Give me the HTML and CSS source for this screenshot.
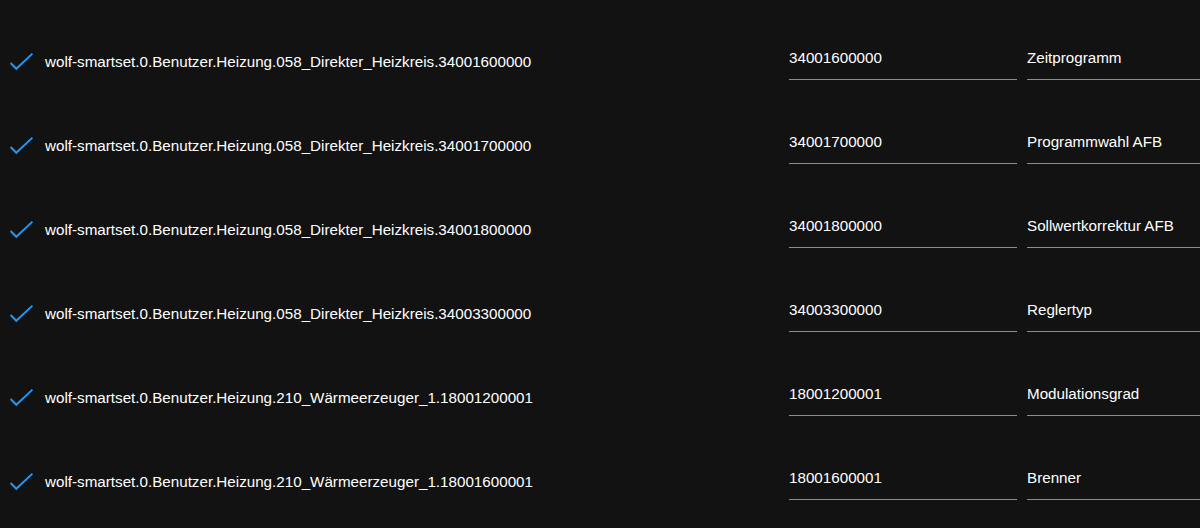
FILE: index.html
```html
<!DOCTYPE html>
<html lang="de">
<head>
<meta charset="utf-8">
<title>Objekte</title>
<link rel="stylesheet" href="styles.css">
</head>
<body>
<div class="list">
  <div class="row">
    <span class="icon"><svg viewBox="0 0 24 24" width="24" height="24"><polyline points="1.5,12.5 7,18 22.5,3.5"/></svg></span>
    <span class="name">wolf-smartset.0.Benutzer.Heizung.058_Direkter_Heizkreis.34001600000</span>
    <label class="field"><input class="input" value="34001600000"></label>
    <label class="field"><input class="input" value="Zeitprogramm"></label>
  </div>
  <div class="row">
    <span class="icon"><svg viewBox="0 0 24 24" width="24" height="24"><polyline points="1.5,12.5 7,18 22.5,3.5"/></svg></span>
    <span class="name">wolf-smartset.0.Benutzer.Heizung.058_Direkter_Heizkreis.34001700000</span>
    <label class="field"><input class="input" value="34001700000"></label>
    <label class="field"><input class="input" value="Programmwahl AFB"></label>
  </div>
  <div class="row">
    <span class="icon"><svg viewBox="0 0 24 24" width="24" height="24"><polyline points="1.5,12.5 7,18 22.5,3.5"/></svg></span>
    <span class="name">wolf-smartset.0.Benutzer.Heizung.058_Direkter_Heizkreis.34001800000</span>
    <label class="field"><input class="input" value="34001800000"></label>
    <label class="field"><input class="input" value="Sollwertkorrektur AFB"></label>
  </div>
  <div class="row">
    <span class="icon"><svg viewBox="0 0 24 24" width="24" height="24"><polyline points="1.5,12.5 7,18 22.5,3.5"/></svg></span>
    <span class="name">wolf-smartset.0.Benutzer.Heizung.058_Direkter_Heizkreis.34003300000</span>
    <label class="field"><input class="input" value="34003300000"></label>
    <label class="field"><input class="input" value="Reglertyp"></label>
  </div>
  <div class="row">
    <span class="icon"><svg viewBox="0 0 24 24" width="24" height="24"><polyline points="1.5,12.5 7,18 22.5,3.5"/></svg></span>
    <span class="name">wolf-smartset.0.Benutzer.Heizung.210_Wärmeerzeuger_1.18001200001</span>
    <label class="field"><input class="input" value="18001200001"></label>
    <label class="field"><input class="input" value="Modulationsgrad"></label>
  </div>
  <div class="row">
    <span class="icon"><svg viewBox="0 0 24 24" width="24" height="24"><polyline points="1.5,12.5 7,18 22.5,3.5"/></svg></span>
    <span class="name">wolf-smartset.0.Benutzer.Heizung.210_Wärmeerzeuger_1.18001600001</span>
    <label class="field"><input class="input" value="18001600001"></label>
    <label class="field"><input class="input" value="Brenner"></label>
  </div>
</div>
</body>
</html>
```
FILE: styles.css
```css
html, body {
  margin: 0;
  padding: 0;
  background: #121212;
  overflow: hidden;
}

body {
  font-family: "Liberation Sans", Arial, sans-serif;
  color: #fff;
  width: 1200px;
  height: 528px;
}

.list {
  display: flex;
  flex-direction: column;
  padding-top: 20px;
}

.row {
  display: flex;
  align-items: center;
  height: 84px;
  white-space: nowrap;
}

.icon {
  width: 45px;
  flex: none;
  display: flex;
  justify-content: center;
  padding-right: 3px;
  box-sizing: border-box;
}

.icon svg {
  fill: none;
  stroke: #2196f3;
  stroke-width: 1.9;
  width: 25px;
  height: 25px;
}

.name {
  flex: none;
  width: 744px;
  font-size: 15.2px;
  line-height: 20px;
}

.field {
  flex: none;
  width: 228px;
  margin-right: 10px;
  margin-top: 2px;
  display: block;
}

.input {
  display: block;
  width: 100%;
  box-sizing: border-box;
  background: transparent;
  border: 0;
  border-bottom: 1px solid #8c8c8c;
  color: #fff;
  font: 15.2px/20px "Liberation Sans", Arial, sans-serif;
  padding: 2px 0 11px;
  outline: none;
}
```
